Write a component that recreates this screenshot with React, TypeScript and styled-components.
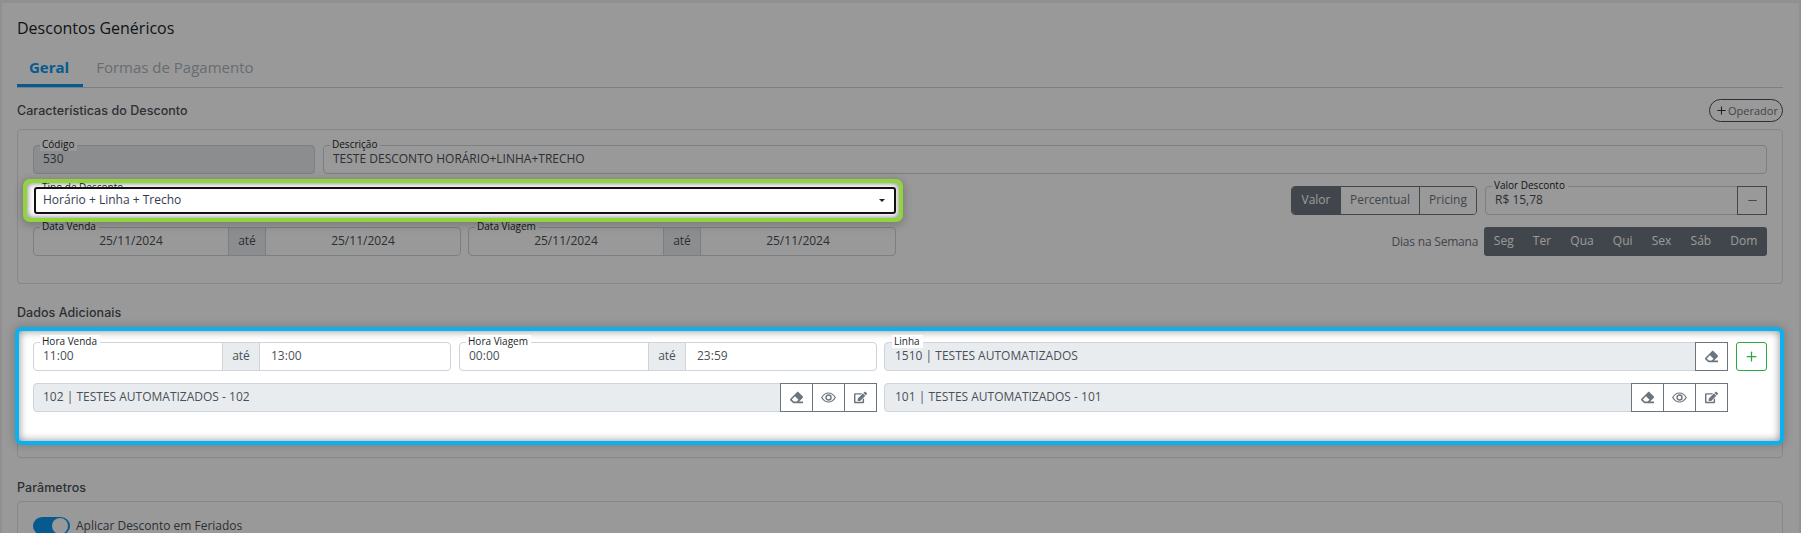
import styled, { createGlobalStyle } from 'styled-components'
import { FaEraser, FaEdit } from 'react-icons/fa'
import { FiMinus, FiPlus } from 'react-icons/fi'

const GlobalStyle = createGlobalStyle`
    html, body {
        margin: 0;
        height: 100%;
        overflow: hidden;
        background: #f0f0f0;
    }
    body {
        font-family: 'Open Sans', 'Noto Sans', sans-serif;
        font-size: 12px;
        color: #495057;
    }
`

const Page = styled.div`
    position: relative;
    height: 533px;
    overflow: hidden;
`

const Backdrop = styled.div`
    position: absolute;
    inset: 0;
    background: rgba(0, 0, 0, 0.4);
    z-index: 10;
`

const Card = styled.main`
    margin: 3px 2px 0;
    padding: 14px 16px 0 15px;
    background: #fff;
    height: 530px;
    box-sizing: border-box;
`

const Title = styled.h1`
    margin: 0;
    font-size: 16px;
    font-weight: 400;
    line-height: 22px;
    color: #212529;
`

const Tabs = styled.nav`
    display: flex;
    margin-top: 11px;
    border-bottom: 1px solid #ced4da;
`

const Tab = styled.div<{ $active?: boolean }>`
    padding: 7px ${p => (p.$active ? 14 : 13)}px 7px 12px;
    margin-right: 1px;
    font-size: 15px;
    line-height: 20px;
    font-weight: ${p => (p.$active ? 700 : 500)};
    color: ${p => (p.$active ? '#0a97f0' : '#adb5bd')};
    border-bottom: 3px solid ${p => (p.$active ? '#0a97f0' : 'transparent')};
`

const SectionRow = styled.div`
    display: flex;
    align-items: center;
    justify-content: space-between;
    margin-top: 11px;
    height: 23px;
`

const SectionTitle = styled.h2<{ $top?: number }>`
    margin: ${p => p.$top ?? 0}px 0 0;
    font-family: Inter, 'Open Sans', sans-serif;
    font-size: 12.5px;
    font-weight: 500;
    letter-spacing: 0.05px;
    line-height: 18px;
    color: #4b5259;
`

const OperatorButton = styled.button`
    display: flex;
    align-items: center;
    height: 23px;
    width: 74px;
    padding: 0 0 0 5px;
    box-sizing: border-box;
    border: 1px solid #495057;
    border-radius: 12px;
    background: #fff;
    font: 400 11px 'Open Sans', sans-serif;
    color: #6c757d;
`

const Panel = styled.section<{ $gap?: number }>`
    margin-top: ${p => p.$gap ?? 7}px;
    border: 1px solid #dee2e6;
    border-radius: 4px;
`

const CharacteristicsBody = styled.div`
    display: flex;
    flex-direction: column;
    gap: 12px;
    padding: 15px 15px 27px 15px;
`

const FormRow = styled.div<{ $gap?: number }>`
    display: flex;
    align-items: flex-start;
    gap: ${p => p.$gap ?? 8}px;
`

const RightGroup = styled.div`
    display: flex;
    align-items: center;
    margin-left: auto;
    gap: 8px;
`

const Field = styled.div<{ $width?: number; $muted?: boolean; $grow?: boolean; $pull?: boolean }>`
    position: relative;
    display: flex;
    align-items: stretch;
    box-sizing: border-box;
    height: 29px;
    flex: ${p => (p.$grow ? '1 1 0' : 'none')};
    width: ${p => (p.$width ? `${p.$width}px` : 'auto')};
    margin-left: ${p => (p.$pull ? '-1px' : '0')};
    background: ${p => (p.$muted ? '#e9ecef' : '#fff')};
    border: 1px solid #ced4da;
    border-radius: 4px;
    line-height: 26px;
    color: #495057;
`

const FloatLabel = styled.span<{ $left?: number }>`
    position: absolute;
    top: -8px;
    left: ${p => p.$left ?? 6}px;
    padding: 0 3px 0 2px;
    background: #fff;
    font-size: 10px;
    line-height: 13px;
    color: #212529;
`

const Value = styled.div<{ $center?: boolean; $inset?: number }>`
    flex: 1 1 0;
    min-width: 0;
    padding-left: ${p => p.$inset ?? 9}px;
    text-align: ${p => (p.$center ? 'center' : 'left')};
    white-space: nowrap;
`

const Addon = styled.div`
    flex: none;
    width: 38px;
    text-align: center;
    background: #e9ecef;
    border-left: 1px solid #ced4da;
    border-right: 1px solid #ced4da;
    box-sizing: border-box;
`

const SpotlightSelect = styled.div`
    position: relative;
    z-index: 11;
    flex: none;
    width: 872px;
    height: 35px;
    margin: -3px 0 -3px -6px;
    padding: 4px 3px 4px 7px;
    box-sizing: border-box;
    background: #fff;
    border-radius: 3px;
    box-shadow: 0 0 0 4px #92d43c, 0 2px 9px 5px rgba(0, 0, 0, 0.22), inset 0 0 6px rgba(0, 0, 0, 0.55);
`

const SelectLabel = styled.span`
    position: absolute;
    top: -2px;
    left: 15px;
    font-size: 10px;
    line-height: 13px;
    color: #212529;
`

const SelectBox = styled.div`
    position: relative;
    box-sizing: border-box;
    height: 27px;
    padding-left: 7px;
    background: #fff;
    border: 2px solid #111;
    border-radius: 3px;
    font-size: 12px;
    line-height: 22px;
    color: #343a50;

    &::after {
        content: '';
        position: absolute;
        right: 9px;
        top: 10px;
        border-left: 3px solid transparent;
        border-right: 3px solid transparent;
        border-top: 3px solid #222;
    }
`

const SegmentGroup = styled.div`
    display: flex;
    height: 29px;
    box-sizing: border-box;
    border: 1px solid #6c757d;
    border-radius: 4px;
    overflow: hidden;
`

const Segment = styled.div<{ $active?: boolean; $width: number }>`
    width: ${p => p.$width}px;
    box-sizing: border-box;
    text-align: center;
    line-height: 26px;
    color: ${p => (p.$active ? '#fff' : '#6c757d')};
    background: ${p => (p.$active ? '#6c757d' : '#fff')};

    & + & {
        border-left: 1px solid #6c757d;
    }
`

const SquareButton = styled.button<{ $width?: number }>`
    display: flex;
    flex: none;
    align-items: center;
    justify-content: center;
    box-sizing: border-box;
    width: ${p => p.$width ?? 33}px;
    height: 29px;
    margin: -1px 0;
    padding: 0;
    background: #fff;
    color: #6c757d;
    border: 1px solid #6c757d;
    font-size: 13px;

    & + & {
        margin-left: -1px;
    }

    &:last-child {
        margin-right: -1px;
    }
`

const AddButton = styled(SquareButton)`
    color: #28a745;
    border-color: #28a745;
    border-radius: 3px;

    &&& {
        margin: 0;
    }
`

const DaysLabel = styled.span`
    margin-right: -2px;
    color: #6c757d;
    font-size: 12px;
    letter-spacing: -0.2px;
`

const DaysGroup = styled.div`
    display: flex;
    height: 29px;
    background: #6c757d;
    border-radius: 3px;
`

const Day = styled.div`
    padding: 0 9.6px;
    line-height: 28px;
    color: #fff;
`

const SpotlightPanel = styled.div`
    position: relative;
    z-index: 11;
    display: flex;
    flex-direction: column;
    gap: 12px;
    height: 110px;
    margin: 0 2px 16px 1px;
    padding: 11px 13px 0 14px;
    box-sizing: border-box;
    background: #fff;
    border-radius: 3px;
    box-shadow: 0 0 0 4px #0ab1ee, 0 0 8px 5px rgba(0, 0, 0, 0.18), inset 0 0 9px rgba(0, 0, 0, 0.45);
`

const ParamsBody = styled.div`
    display: flex;
    align-items: center;
    gap: 6px;
    padding: 15px;
    line-height: 16px;
`

const Toggle = styled.div`
    position: relative;
    width: 37px;
    height: 18px;
    background: #0a97f0;
    border-radius: 9px;

    &::after {
        content: '';
        position: absolute;
        top: 1px;
        right: 2px;
        width: 16px;
        height: 16px;
        background: #fff;
        border-radius: 50%;
    }
`

const DAYS = ['Seg', 'Ter', 'Qua', 'Qui', 'Sex', 'Sáb', 'Dom']

const EyeIcon = () => (
    <svg width="15" height="15" viewBox="0 0 16 16" fill="none" stroke="currentColor">
        <path d="M.8 8C2.600 4.900 5.100 3.200 8 3.200s5.400 1.700 7.200 4.800c-1.800 3.100-4.300 4.800-7.200 4.800S2.600 11.100.8 8z" strokeWidth="1.300" />
        <circle cx="8" cy="8" r="2.700" strokeWidth="1.500" />
    </svg>
)

type RangeProps = { label: string; from: string; to: string; width: number; center?: boolean }

const RangeField = ({ label, from, to, width, center }: RangeProps) => (
    <Field $width={width}>
        <FloatLabel>{label}</FloatLabel>
        <Value $center={center} $inset={center ? 0 : 9}>{from}</Value>
        <Addon>até</Addon>
        <Value $center={center} $inset={center ? 0 : 11}>{to}</Value>
    </Field>
)

const Actions = () => (
    <>
        <SquareButton><FaEraser /></SquareButton>
        <SquareButton><EyeIcon /></SquareButton>
        <SquareButton><FaEdit /></SquareButton>
    </>
)

const App = () => (
    <Page>
        <GlobalStyle />
        <Card>
            <Title>Descontos Genéricos</Title>
            <Tabs>
                <Tab $active>Geral</Tab>
                <Tab>Formas de Pagamento</Tab>
            </Tabs>

            <SectionRow>
                <SectionTitle>Características do Desconto</SectionTitle>
                <OperatorButton><FiPlus size={13} color="#343a40" />Operador</OperatorButton>
            </SectionRow>
            <Panel>
                <CharacteristicsBody>
                    <FormRow>
                        <Field $width={282} $muted>
                            <FloatLabel>Código</FloatLabel>
                            <Value>530</Value>
                        </Field>
                        <Field $grow>
                            <FloatLabel>Descrição</FloatLabel>
                            <Value>TESTE DESCONTO HORÁRIO+LINHA+TRECHO</Value>
                        </Field>
                    </FormRow>
                    <FormRow>
                        <SpotlightSelect>
                            <SelectLabel>Tipo de Desconto</SelectLabel>
                            <SelectBox>Horário + Linha + Trecho</SelectBox>
                        </SpotlightSelect>
                        <RightGroup>
                            <SegmentGroup>
                                <Segment $active $width={48}>Valor</Segment>
                                <Segment $width={79}>Percentual</Segment>
                                <Segment $width={57}>Pricing</Segment>
                            </SegmentGroup>
                            <Field $width={282}>
                                <FloatLabel>Valor Desconto</FloatLabel>
                                <Value>R$ 15,78</Value>
                                <SquareButton $width={30}><FiMinus /></SquareButton>
                            </Field>
                        </RightGroup>
                    </FormRow>
                    <FormRow $gap={7}>
                        <RangeField label="Data Venda" from="25/11/2024" to="25/11/2024" width={428} center />
                        <RangeField label="Data Viagem" from="25/11/2024" to="25/11/2024" width={428} center />
                        <RightGroup>
                            <DaysLabel>Dias na Semana</DaysLabel>
                            <DaysGroup>
                                {DAYS.map(day => <Day key={day}>{day}</Day>)}
                            </DaysGroup>
                        </RightGroup>
                    </FormRow>
                </CharacteristicsBody>
            </Panel>

            <SectionTitle $top={20}>Dados Adicionais</SectionTitle>
            <Panel $gap={8}>
                <SpotlightPanel>
                    <FormRow>
                        <RangeField label="Hora Venda" from="11:00" to="13:00" width={418} />
                        <RangeField label="Hora Viagem" from="00:00" to="23:59" width={418} />
                        <Field $width={844} $muted $pull>
                            <FloatLabel $left={7}>Linha</FloatLabel>
                            <Value $inset={10}>1510 | TESTES AUTOMATIZADOS</Value>
                            <SquareButton><FaEraser /></SquareButton>
                        </Field>
                        <AddButton $width={31}><FiPlus size={15} /></AddButton>
                    </FormRow>
                    <FormRow $gap={7}>
                        <Field $width={844} $muted>
                            <Value>102 | TESTES AUTOMATIZADOS - 102</Value>
                            <Actions />
                        </Field>
                        <Field $width={844} $muted>
                            <Value $inset={10}>101 | TESTES AUTOMATIZADOS - 101</Value>
                            <Actions />
                        </Field>
                    </FormRow>
                </SpotlightPanel>
            </Panel>

            <SectionTitle $top={21}>Parâmetros</SectionTitle>
            <Panel $gap={4}>
                <ParamsBody>
                    <Toggle />
                    <span>Aplicar Desconto em Feriados</span>
                </ParamsBody>
            </Panel>
        </Card>
        <Backdrop />
    </Page>
)

export default App
